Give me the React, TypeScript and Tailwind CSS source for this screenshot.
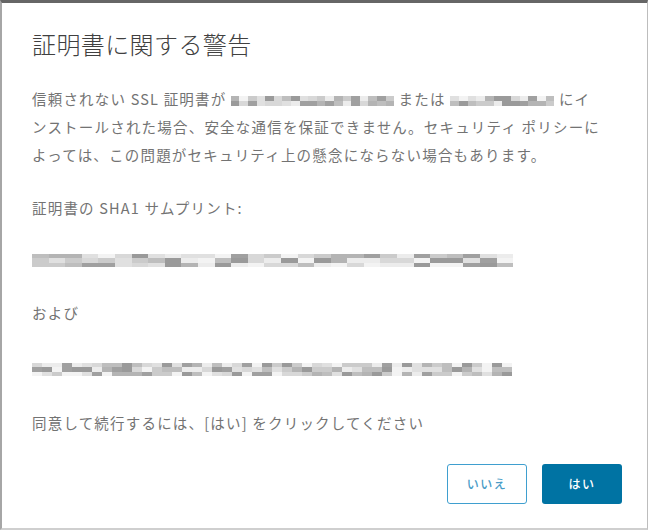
const palette = [
  "bg-[#f3f3f3]",
  "bg-[#e0e0e0]",
  "bg-[#cbcbcb]",
  "bg-[#b4b4b4]",
  "bg-[#a0a0a0]",
  "bg-[#d8d8d8]",
  "bg-[#bebebe]",
  "bg-[#ececec]",
  "bg-[#9a9a9a]",
];

// simple deterministic shade picker so the blur looks the same every run
function shade(seed: number, i: number) {
  const v = Math.abs(Math.sin(seed * 97.3 + i * 12.9898) * 43758.5453);
  return palette[Math.floor((v - Math.floor(v)) * palette.length)];
}

function Redacted({ cols, seed, w, rows }: { cols: number; seed: number; w: string; rows: string[] }) {
  return (
    <span className="inline-flex align-middle">
      {Array.from({ length: cols }).map((_, c) => (
        <span key={c} className={`flex flex-col ${w}`}>
          {rows.map((h, r) => (
            <span key={r} className={`${h} ${shade(seed, c * 7 + r)}`} />
          ))}
        </span>
      ))}
    </span>
  );
}

export default function App() {
  return (
    <div className="w-[648px] h-[530px] bg-white overflow-hidden">
      <div
        className="w-full h-full flex flex-col border-t-[3px] border-t-[#666666] border-l-2 border-l-[#a6a6a6] border-r border-r-[#bdbdbd] border-b-2 border-b-[#cfcfcf] pl-[30px] pr-[24px] pt-[24px] text-[#737373]"
        style={{ fontFamily: '"Noto Sans CJK JP", "Noto Sans", sans-serif' }}
      >
        <h1 className="text-[24px] leading-[34px] font-light tracking-[0.4px] text-[#404040]">証明書に関する警告</h1>

        <p className="mt-[24px] text-[14.5px] leading-[28px] tracking-[1.2px] whitespace-nowrap">
          信頼されない SSL 証明書が{" "}
          <Redacted cols={19} seed={3} w="w-[8.6px]" rows={["h-[5px]", "h-[5px]"]} /> または{" "}
          <Redacted cols={12} seed={8} w="w-[8.7px]" rows={["h-[5px]", "h-[5px]"]} /> にイ
          <br />
          ンストールされた場合、安全な通信を保証できません。セキュリティ ポリシーに
          <br />
          よっては、この問題がセキュリティ上の懸念にならない場合もあります。
        </p>

        <p className="mt-[25px] text-[14.5px] leading-[28px] tracking-[1.2px]">証明書の SHA1 サムプリント:</p>

        <div className="mt-[32px] flex">
          <Redacted cols={29} seed={5} w="w-[16.6px]" rows={["h-[4px]", "h-[5px]", "h-[4px]"]} />
        </div>

        <p className="mt-[32px] text-[14.5px] leading-[28px] tracking-[1.2px]">および</p>

        <div className="mt-[36px] flex">
          <Redacted cols={48} seed={11} w="w-[10px]" rows={["h-[4px]", "h-[5px]", "h-[4px]"]} />
        </div>

        <p className="mt-[33px] text-[14.5px] leading-[28px] tracking-[1.2px]">
          同意して続行するには、[はい] をクリックしてください
        </p>

        <div className="mt-[27px] flex justify-end gap-[15px] pr-[1px]">
          <button className="w-[80px] h-[40px] rounded-[3px] border border-[#3f9fcf] bg-white text-[12px] font-medium tracking-[1.5px] text-[#4a9cc7]">
            いいえ
          </button>
          <button className="w-[80px] h-[40px] rounded-[3px] bg-[#0073a3] text-[12px] font-medium tracking-[1.5px] text-white">
            はい
          </button>
        </div>
      </div>
    </div>
  );
}
